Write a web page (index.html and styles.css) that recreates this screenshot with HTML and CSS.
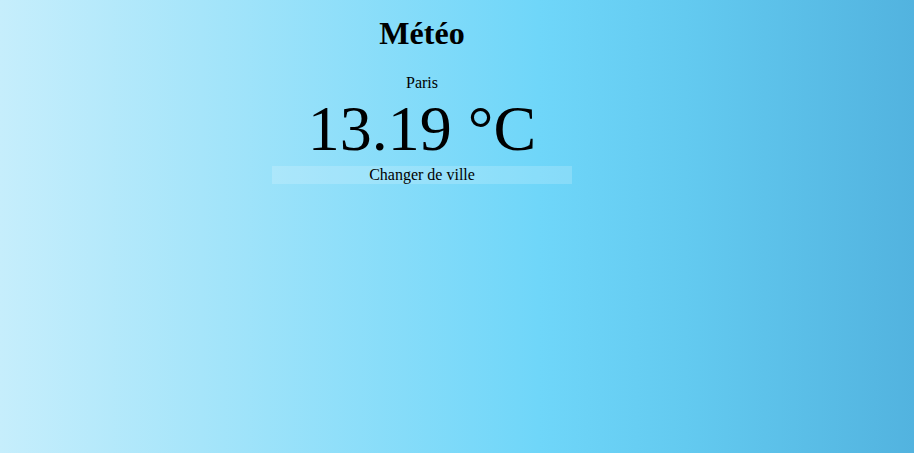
FILE: index.html
```html
<!DOCTYPE html>
<html lang="fr">
<head>
<meta charset="utf-8">
<title>Météo</title>
<link rel="stylesheet" href="styles.css">
</head>
<body>
<main class="app">
  <h1 class="title">Météo</h1>
  <div class="city">Paris</div>
  <div class="temp">13.19 °C</div>
  <button class="change">Changer de ville</button>
</main>
</body>
</html>
```
FILE: styles.css
```css
html, body {
  margin: 0;
  height: 100%;
}
body {
  background: linear-gradient(to right, #c6eefc 0%, #a6e5fa 22%, #6fd6f9 59%, #63caf0 75%, #52b3df 100%);
  font-family: "Liberation Serif", "Times New Roman", serif;
  color: #000;
}
.app {
  width: 844px;
  display: flex;
  flex-direction: column;
  align-items: center;
  text-align: center;
}
.title {
  font-size: 32px;
  font-weight: bold;
  margin: 15px 0 22px;
}
.city {
  font-size: 16px;
}
.temp {
  font-size: 64px;
}
.change {
  width: 300px;
  height: 18px;
  padding: 0;
  border: none;
  background: rgba(255, 255, 255, 0.18);
  font-family: "Liberation Serif", "Times New Roman", serif;
  font-size: 16px;
  line-height: 18px;
  color: #000;
}
```
